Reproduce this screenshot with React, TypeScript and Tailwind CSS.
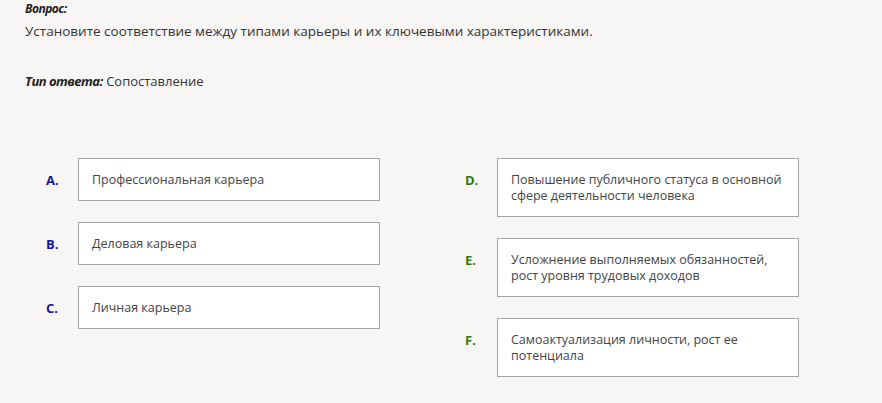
import React from 'react';

const LEFT = [
  { key: 'A.', text: 'Профессиональная карьера' },
  { key: 'B.', text: 'Деловая карьера' },
  { key: 'C.', text: 'Личная карьера' },
];

const RIGHT = [
  { key: 'D.', text: 'Повышение публичного статуса в основной сфере деятельности человека' },
  { key: 'E.', text: 'Усложнение выполняемых обязанностей, рост уровня трудовых доходов' },
  { key: 'F.', text: 'Самоактуализация личности, рост ее потенциала' },
];

const Item = ({ k, text, color }: { k: string; text: string; color: string }) => (
  <div className="flex items-start">
    <span className={`w-[32px] pt-[14px] text-[13px] font-bold leading-[16px] ${color}`}>{k}</span>
    <div className="w-[302px] border border-[#a3a3a3] bg-white px-[13px] pt-[13px] pb-[12px] text-[12.5px] leading-[16px] text-[#444]">
      {text}
    </div>
  </div>
);

export default function App() {
  return (
    <div
      className="h-[403px] w-[882px] bg-[#f7f6f4] px-[25px] pt-[1px] text-[#333]"
      style={{ fontFamily: '"Open Sans", "Noto Sans", sans-serif' }}
    >
      <div className="text-[12px] font-bold italic leading-[16px] tracking-[-0.5px] text-[#222]">Вопрос:</div>
      <div className="mt-[5px] text-[13.5px] leading-[18px] text-[#333]">
        Установите соответствие между типами карьеры и их ключевыми характеристиками.
      </div>
      <div className="mt-[32px] text-[13px] leading-[18px] text-[#333]">
        <span className="font-bold italic tracking-[-0.5px] text-[#222]">Тип ответа:</span> Сопоставление
      </div>

      <div className="mt-[68px] flex">
        <div className="ml-[21px] flex flex-col gap-[21px]">
          {LEFT.map((it) => (
            <Item key={it.key} k={it.key} text={it.text} color="text-[#16169a]" />
          ))}
        </div>
        <div className="ml-[85px] flex flex-col gap-[21px]">
          {RIGHT.map((it) => (
            <Item key={it.key} k={it.key} text={it.text} color="text-[#2a7a18]" />
          ))}
        </div>
      </div>
    </div>
  );
}
